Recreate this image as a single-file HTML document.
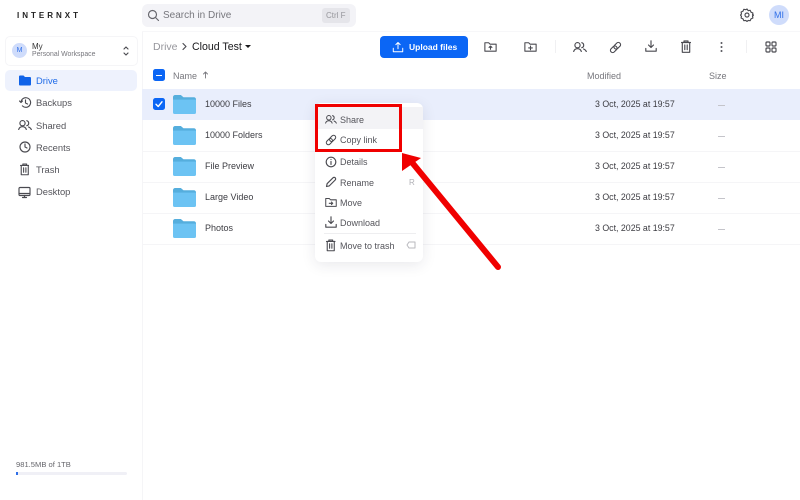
<!DOCTYPE html>
<html><head><meta charset="utf-8"><style>
html,body{margin:0;padding:0;width:800px;height:500px;overflow:hidden;background:#fff}
body{font-family:"Liberation Sans",sans-serif;color:#4a4a50;position:relative}
#w{position:absolute;left:0;top:0;width:800px;height:500px;filter:blur(.35px)}
.a{position:absolute;white-space:nowrap;line-height:14px;margin-top:1px}
svg{position:absolute;fill:none;stroke:#4a4a50;stroke-width:1.15;stroke-linecap:round;stroke-linejoin:round}
.s{font-size:9.4px;color:#55555b;left:36px}
.f{font-size:9px;color:#3c3c42;left:205px}
.d{font-size:8.8px;color:#3c3c42;left:595px}
.m{font-size:9px;color:#55555b;left:340px}
.dash{position:absolute;left:718px;width:7px;height:1px;background:#c4c4ca}
.sep{position:absolute;left:142px;width:658px;height:1px;background:#f5f5f7}
</style></head><body>
<svg width="0" height="0" style="position:absolute"><defs>
<symbol id="folder" viewBox="1 1 22 18.600" preserveAspectRatio="none"><path d="M1 3a2 2 0 0 1 2-2h5.500l2.500 2.200h10a2 2 0 0 1 2 2V8H1z" fill="#55aedd" stroke="none"/><path d="M1 5.500h22V18a1.600 1.600 0 0 1-1.600 1.600H2.600A1.600 1.600 0 0 1 1 18z" fill="#6cc3f3" stroke="none"/></symbol>
<symbol id="users" viewBox="0 0 14 10"><circle cx="4.500" cy="3.200" r="2.600"/><path d="M.7 9.500c.5-1.800 2-2.800 3.800-2.800s3.300 1 3.800 2.800"/><path d="M8.800.7a2.600 2.600 0 0 1 0 5M10.600 7c1.300.5 2.200 1.300 2.700 2.500"/></symbol>
<symbol id="link" viewBox="0 0 13 13"><rect x="1" y="6" width="7.500" height="4.500" rx="2.250" transform="rotate(-45 4.750 8.250)"/><rect x="4.500" y="2.500" width="7.500" height="4.500" rx="2.250" transform="rotate(-45 8.250 4.750)"/></symbol>
<symbol id="dl" viewBox="0 0 12 12"><path d="M6 .8v6.500M3.500 5L6 7.500 8.500 5M.8 8.500v2.700h10.400V8.500"/></symbol>
<symbol id="trash" viewBox="0 0 10 13"><path d="M.5 2.500h9M3 2.500V1h4v1.500M1.300 2.500v9.800h7.400V2.500M3.800 5v4.700M6.200 5v4.700"/></symbol>
<symbol id="fold" viewBox="0 0 16 16"><path d="M2 4h4l1.500 1.500H14V13H2zM8 7.500v3.500M6.500 9L8 7.500 9.500 9"/></symbol>
</defs></svg>
<div id="w">
<!-- borders -->
<div style="position:absolute;left:142px;top:31px;width:1px;height:469px;background:#f5f5f7"></div>
<div style="position:absolute;left:142px;top:31px;width:658px;height:1px;background:#f7f7f9"></div>

<!-- logo -->
<div class="a" style="left:17px;top:8px;font-size:8px;font-weight:bold;letter-spacing:3px;color:#222">INTERNXT</div>

<!-- search -->
<div style="position:absolute;left:142px;top:4px;width:214px;height:23px;background:#f3f3f7;border-radius:6px"></div>
<svg style="left:147px;top:9px;stroke:#66666c" width="13" height="13" viewBox="0 0 13 13"><circle cx="5.500" cy="5.500" r="4"/><path d="M8.500 8.500l3 3"/></svg>
<div class="a" style="left:163px;top:8px;font-size:10px;color:#77777d">Search in Drive</div>
<div style="position:absolute;left:322px;top:8px;width:28px;height:15px;background:#e5e5ea;border-radius:3px"></div>
<div class="a" style="left:326px;top:8px;font-size:8px;color:#96969c">Ctrl F</div>

<!-- top right -->
<svg style="left:740px;top:8px" width="14" height="14" viewBox="0 0 14 14"><circle cx="7" cy="7" r="2"/><path d="M7 1l1.200 1.700 2-.4.800 1.900 1.900.8-.4 2L13.500 7l-1 1.500.4 1.500-1.900.9-.8 1.800-2-.3L7 13.500l-1.200-1.100-2 .3-.8-1.800-1.900-.9.400-1.500L.5 7l1-1-.4-2 1.900-.8.800-1.900 2 .4z"/></svg>
<div style="position:absolute;left:769px;top:5px;width:20px;height:20px;border-radius:50%;background:#cfdcfb"></div>
<div class="a" style="left:769px;top:7px;width:20px;text-align:center;font-size:9px;color:#2f6fe8">MI</div>

<!-- workspace -->
<div style="position:absolute;left:5px;top:36px;width:131px;height:28px;border:1px solid #f5f5f7;border-radius:5px"></div>
<div style="position:absolute;left:12px;top:43px;width:15px;height:15px;border-radius:50%;background:#cfdcfb"></div>
<div class="a" style="left:12px;top:43px;width:15px;text-align:center;font-size:7px;color:#2f6fe8">M</div>
<div class="a" style="left:32px;top:39px;font-size:8px;color:#333">My</div>
<div class="a" style="left:32px;top:47px;font-size:6.900px;color:#77777d">Personal Workspace</div>
<svg style="left:122px;top:45px" width="8" height="12" viewBox="0 0 8 12"><path d="M2 4l2-2 2 2M2 8l2 2 2-2"/></svg>

<!-- nav -->
<div style="position:absolute;left:5px;top:70px;width:132px;height:21px;background:#eef2fd;border-radius:5px"></div>
<svg style="left:19px;top:75px;stroke:none;fill:#0f62e8" width="12" height="11" viewBox="0 0 12 11"><path d="M0 1.500a1 1 0 0 1 1-1h3.500L6 2h5a1 1 0 0 1 1 1v6.500a1 1 0 0 1-1 1H1a1 1 0 0 1-1-1z"/></svg>
<div class="a s" style="top:73px;color:#1f6be8">Drive</div>
<svg style="left:19px;top:96px" width="13" height="13" viewBox="0 0 13 13"><path d="M2 6.500a4.800 4.800 0 1 1 1.400 3.400M.5 5l1.500 1.500L3.500 5M6.500 4v3l2 1"/></svg>
<div class="a s" style="top:95px">Backups</div>
<svg style="left:18px;top:120px" width="14" height="10"><use href="#users"/></svg>
<div class="a s" style="top:118px">Shared</div>
<svg style="left:19px;top:141px" width="12" height="12" viewBox="0 0 12 12"><circle cx="6" cy="6" r="5"/><path d="M6 3v3l2 1"/></svg>
<div class="a s" style="top:140px">Recents</div>
<svg style="left:19.500px;top:163px" width="9.500" height="12.500"><use href="#trash"/></svg>
<div class="a s" style="top:162px">Trash</div>
<svg style="left:18px;top:186px" width="13" height="13" viewBox="0 0 13 13"><rect x="1" y="1.500" width="11" height="8" rx="1"/><path d="M1 7.500h11M4.500 11.500h4M6.500 9.500v2"/></svg>
<div class="a s" style="top:184px">Desktop</div>

<!-- storage -->
<div class="a" style="left:16px;top:457px;font-size:7.600px;color:#66666c">981.5MB of 1TB</div>
<div style="position:absolute;left:16px;top:472px;width:111px;height:3px;background:#f0f0f6;border-radius:2px"></div>
<div style="position:absolute;left:16px;top:472px;width:1.500px;height:3px;background:#2f6fe8"></div>

<!-- breadcrumb -->
<div class="a" style="left:153px;top:39px;font-size:10.500px;color:#96969c">Drive</div>
<svg style="left:181px;top:42px" width="7" height="9" viewBox="0 0 7 9"><path d="M2 1.500l3 3-3 3"/></svg>
<div class="a" style="left:192px;top:39px;font-size:10.600px;color:#18181b">Cloud Test</div>
<svg style="left:245px;top:45px;stroke:none;fill:#18181b" width="6" height="4"><path d="M0 0h6L3 3z"/></svg>

<!-- toolbar -->
<div style="position:absolute;left:380px;top:36px;width:88px;height:22px;background:#0b66f5;border-radius:4px"></div>
<svg style="left:392px;top:41px;stroke:#fff" width="12" height="12" viewBox="0 0 14 14"><path d="M7 9V2M4.500 4.200L7 1.800l2.500 2.400M1.500 8.500V12.500h11V8.500"/></svg>
<div class="a" style="left:409px;top:39px;font-size:8.500px;font-weight:bold;color:#fff">Upload files</div>
<svg style="left:483px;top:39px" width="15" height="15"><use href="#fold"/></svg>
<svg style="left:523px;top:39px" width="15" height="15" viewBox="0 0 16 16"><path d="M2 4h4l1.500 1.500H14V13H2zM6 9.500h4M8 7.500v4"/></svg>
<div style="position:absolute;left:555px;top:40px;width:1px;height:13px;background:#f0f0f2"></div>
<svg style="left:573px;top:42px" width="14" height="10"><use href="#users"/></svg>
<svg style="left:609px;top:41px" width="13" height="13"><use href="#link"/></svg>
<svg style="left:645px;top:40px" width="12" height="12"><use href="#dl"/></svg>
<svg style="left:681px;top:40px" width="10" height="13"><use href="#trash"/></svg>
<svg style="left:720px;top:41px;stroke:none;fill:#55555b" width="3" height="12"><circle cx="1.500" cy="2" r="1"/><circle cx="1.500" cy="6" r="1"/><circle cx="1.500" cy="10" r="1"/></svg>
<div style="position:absolute;left:746px;top:40px;width:1px;height:13px;background:#f0f0f2"></div>
<svg style="left:765px;top:41px" width="12" height="12" viewBox="0 0 12 12"><rect x="1" y="1" width="4" height="4" rx="1"/><rect x="7" y="1" width="4" height="4" rx="1"/><rect x="1" y="7" width="4" height="4" rx="1"/><rect x="7" y="7" width="4" height="4" rx="1"/></svg>

<!-- list header -->
<div style="position:absolute;left:153px;top:69px;width:12px;height:12px;background:#0b66f5;border-radius:2.500px"></div>
<div style="position:absolute;left:156px;top:74.500px;width:6px;height:1.500px;background:#fff"></div>
<div class="a" style="left:173px;top:68px;font-size:9px;color:#77777d">Name</div>
<svg style="left:202px;top:71px;stroke:#77777d;stroke-width:.9" width="7" height="8" viewBox="0 0 7 8"><path d="M3.500 7V1M1.500 3l2-2 2 2"/></svg>
<div class="a" style="left:587px;top:68px;font-size:9px;color:#77777d">Modified</div>
<div class="a" style="left:709px;top:68px;font-size:9px;color:#77777d">Size</div>

<!-- rows -->
<div style="position:absolute;left:142px;top:89px;width:658px;height:31px;background:#e9eefc"></div>
<div class="sep" style="top:151px"></div><div class="sep" style="top:182px"></div><div class="sep" style="top:213px"></div><div class="sep" style="top:244px"></div>
<div style="position:absolute;left:153px;top:98px;width:12px;height:12px;background:#0b66f5;border-radius:2.500px"></div>
<svg style="left:153px;top:98px;stroke:#fff;stroke-width:1.400" width="12" height="12"><path d="M3 6.300l2.200 2.200L9 3.800"/></svg>

<svg style="left:173px;top:94.500px" width="23" height="19"><use href="#folder"/></svg>
<svg style="left:173px;top:125.500px" width="23" height="19"><use href="#folder"/></svg>
<svg style="left:173px;top:156.500px" width="23" height="19"><use href="#folder"/></svg>
<svg style="left:173px;top:187.500px" width="23" height="19"><use href="#folder"/></svg>
<svg style="left:173px;top:218.500px" width="23" height="19"><use href="#folder"/></svg>
<div class="a f" style="top:96px">10000 Files</div>
<div class="a f" style="top:127px">10000 Folders</div>
<div class="a f" style="top:158px">File Preview</div>
<div class="a f" style="top:189px">Large Video</div>
<div class="a f" style="top:220px">Photos</div>
<div class="a d" style="top:96px">3 Oct, 2025 at 19:57</div>
<div class="a d" style="top:127px">3 Oct, 2025 at 19:57</div>
<div class="a d" style="top:158px">3 Oct, 2025 at 19:57</div>
<div class="a d" style="top:189px">3 Oct, 2025 at 19:57</div>
<div class="a d" style="top:220px">3 Oct, 2025 at 19:57</div>
<div class="dash" style="top:105px"></div><div class="dash" style="top:136px"></div><div class="dash" style="top:167px"></div><div class="dash" style="top:198px"></div><div class="dash" style="top:229px"></div>

<!-- context menu -->
<div style="position:absolute;left:315px;top:103px;width:108px;height:159px;background:#fff;border-radius:6px;box-shadow:0 3px 14px rgba(40,40,70,.10)"></div>
<div style="position:absolute;left:315px;top:107px;width:108px;height:22px;background:#f3f3f6"></div>
<svg style="left:325px;top:115px" width="12" height="8.600"><use href="#users"/></svg>
<div class="a m" style="top:112px">Share</div>
<svg style="left:325px;top:134px" width="12" height="12"><use href="#link"/></svg>
<div class="a m" style="top:132px">Copy link</div>
<svg style="left:325px;top:156px" width="12" height="12" viewBox="0 0 12 12"><circle cx="6" cy="6" r="4.800"/><path d="M6 5.500v3M6 3.400v.1"/></svg>
<div class="a m" style="top:154px">Details</div>
<svg style="left:325px;top:176px" width="12" height="12" viewBox="0 0 12 12"><path d="M1.500 10.500l.6-2.800L8 1.800a1.400 1.400 0 0 1 2.200 2.200L4.300 9.900z"/></svg>
<div class="a m" style="top:175px">Rename</div>
<div class="a" style="left:409px;top:175px;font-size:8px;color:#b0b0b6">R</div>
<svg style="left:324px;top:195px" width="14" height="14" viewBox="0 0 16 16"><path d="M2 4h4l1.500 1.500H14V13H2zM6 9.500h4M8.500 8l1.500 1.500L8.500 11"/></svg>
<div class="a m" style="top:195px">Move</div>
<svg style="left:325px;top:216px" width="12" height="12"><use href="#dl"/></svg>
<div class="a m" style="top:215px">Download</div>
<div style="position:absolute;left:324px;top:233px;width:92px;height:1px;background:#eeeef0"></div>
<svg style="left:326px;top:239px" width="9.500" height="12.500"><use href="#trash"/></svg>
<div class="a m" style="top:238px">Move to trash</div>
<svg style="left:406px;top:241px;stroke:#b8b8be;stroke-width:1" width="10" height="8" viewBox="0 0 10 8"><path d="M3 1h6v6H3L1 4z"/></svg>

<!-- annotation -->
<div style="position:absolute;left:315px;top:103.500px;width:81px;height:42px;border:3.500px solid #f00000"></div>
<svg style="left:395px;top:145px;stroke:none" width="115" height="130" viewBox="0 0 115 130"><path d="M103 122L15 15" stroke="#f00000" stroke-width="6" stroke-linecap="round"/><path d="M7 8L26 13 7 26z" fill="#f00000"/></svg>
</div>
</body></html>
